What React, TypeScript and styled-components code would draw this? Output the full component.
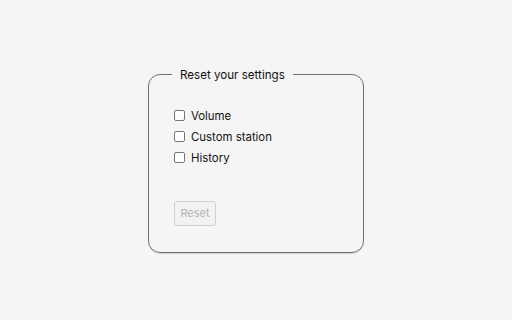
import styled, { createGlobalStyle } from 'styled-components';

const Global = createGlobalStyle`
  html, body {
    margin: 0;
    padding: 0;
    background: #f5f5f5;
  }
  * {
    box-sizing: border-box;
  }
`;

const options = ['Volume', 'Custom station', 'History'];

function App() {
  return (
    <>
      <Global />
      <S.Page>
        <S.Fieldset>
          <S.Legend>Reset your settings</S.Legend>
          <S.List>
            {options.map((name) => (
              <S.Row key={name}>
                <S.Check type="checkbox" />
                <span>{name}</span>
              </S.Row>
            ))}
          </S.List>
          <S.Button disabled>Reset</S.Button>
        </S.Fieldset>
      </S.Page>
    </>
  );
}

export default App;

const S = {
  Page: styled.div`
    width: 100%;
    height: 100vh;
    display: flex;
    align-items: center;
    justify-content: center;
    font-family: Inter, 'Liberation Sans', sans-serif;
    color: #111;
  `,
  Fieldset: styled.fieldset`
    width: 216px;
    margin: 0;
    padding: 27px 24px 26px 23px;
    border: 1px solid #6f6f6f;
    border-radius: 12px;
    box-shadow: 0 1px 0 rgba(0, 0, 0, 0.12);
    display: flex;
    flex-direction: column;
  `,
  Legend: styled.legend`
    padding: 0 8px;
    font-size: 11.6px;
    line-height: 14px;
  `,
  List: styled.div`
    display: flex;
    flex-direction: column;
    gap: 7px;
  `,
  Row: styled.label`
    display: flex;
    align-items: center;
    gap: 6px;
    font-size: 11.4px;
    line-height: 14px;
  `,
  Check: styled.input`
    appearance: none;
    width: 11px;
    height: 11px;
    margin: 0 0 0 2px;
    border: 1px solid #767676;
    border-radius: 2px;
    background: #fff;
  `,
  Button: styled.button`
    align-self: flex-start;
    margin: 36px 0 0 2px;
    width: 42px;
    height: 25px;
    padding: 0;
    font-family: inherit;
    font-size: 11px;
    color: #b5b5b5;
    background: #f2f2f2;
    border: 1px solid #d0d0d0;
    border-radius: 3px;
  `,
};
